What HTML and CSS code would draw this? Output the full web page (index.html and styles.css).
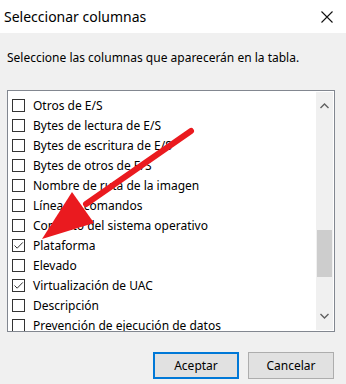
FILE: index.html
```html
<!DOCTYPE html>
<html lang="es">
<head>
    <meta charset="UTF-8">
    <meta name="viewport" content="width=device-width, initial-scale=1.0">
    <title>Seleccionar columnas</title>
    <link rel="stylesheet" href="styles.css">
</head>
<body>
    <div class="dialog">
        <!-- Barra de título -->
        <div class="titlebar">
            <span>Seleccionar columnas</span>
            <svg class="close" width="12" height="12" viewBox="0 0 12 12">
                <path d="M0.5 0.5 L11.5 11.5 M11.5 0.5 L0.5 11.5" stroke="#111" stroke-width="1.1" fill="none"/>
            </svg>
        </div>

        <p class="prompt">Seleccione las columnas que aparecerán en la tabla.</p>

        <!-- Lista de columnas -->
        <div class="listbox">
            <ul class="items">
                <li><span class="check"></span>Otros de E/S</li>
                <li><span class="check"></span>Bytes de lectura de E/S</li>
                <li><span class="check"></span>Bytes de escritura de E/S</li>
                <li><span class="check"></span>Bytes de otros de E/S</li>
                <li><span class="check"></span>Nombre de ruta de la imagen</li>
                <li><span class="check"></span>Línea de comandos</li>
                <li><span class="check"></span>Contexto del sistema operativo</li>
                <li><span class="check checked"><svg width="11" height="11" viewBox="0 0 11 11"><path d="M1.5 5.5 L4.2 8.2 L9.8 2.4" stroke="#333" stroke-width="1" fill="none"/></svg></span>Plataforma</li>
                <li><span class="check"></span>Elevado</li>
                <li><span class="check checked"><svg width="11" height="11" viewBox="0 0 11 11"><path d="M1.5 5.5 L4.2 8.2 L9.8 2.4" stroke="#333" stroke-width="1" fill="none"/></svg></span>Virtualización de UAC</li>
                <li><span class="check"></span>Descripción</li>
                <li><span class="check"></span>Prevención de ejecución de datos</li>
            </ul>
            <div class="scrollbar">
                <svg class="arrow-btn" width="9" height="6" viewBox="0 0 9 6"><path d="M0.5 5 L4.5 1 L8.5 5" stroke="#606060" stroke-width="1.4" fill="none"/></svg>
                <div class="track">
                    <div class="thumb"></div>
                </div>
                <svg class="arrow-btn" width="9" height="6" viewBox="0 0 9 6"><path d="M0.5 1 L4.5 5 L8.5 1" stroke="#606060" stroke-width="1.4" fill="none"/></svg>
            </div>
        </div>

        <div class="buttons">
            <button class="primary">Aceptar</button>
            <button>Cancelar</button>
        </div>
    </div>

    <!-- Flecha roja sobre la captura -->
    <svg class="overlay" width="346" height="384" viewBox="0 0 346 384">
        <path d="M191 131 L86 204" stroke="#ea1a1f" stroke-width="6" stroke-linecap="round" fill="none"/>
        <polygon points="42,239 72,192 94,223" fill="#ea1a1f"/>
    </svg>
</body>
</html>
```

FILE: styles.css
```css
body {
    margin: 0;
    padding: 0;
    background-color: #f0f0f0;
    font-family: "Noto Sans", "Open Sans", sans-serif;
    font-size: 12px;
    color: #000;
}
.dialog {
    width: 346px;
    height: 384px;
    display: flex;
    flex-direction: column;
}
.titlebar {
    height: 33px;
    background-color: #fff;
    display: flex;
    align-items: center;
    justify-content: space-between;
    padding: 0 13px 0 4px;
    font-size: 14px;
}
.close {
    margin-top: 1px;
}
.prompt {
    margin: 0;
    padding: 17px 7px 0;
    line-height: 16px;
}
.listbox {
    margin: 24px 11px 0 7px;
    height: 240px;
    border: 1px solid #828790;
    background-color: #fff;
    display: flex;
    overflow: hidden;
}
.items {
    list-style: none;
    margin: 0;
    padding: 4px 0 0 4px;
    flex: 1;
}
.items li {
    height: 20px;
    display: flex;
    align-items: center;
    white-space: nowrap;
}
.check {
    width: 13px;
    height: 13px;
    box-sizing: border-box;
    border: 1px solid #333;
    background-color: #fff;
    margin-right: 8px;
    display: flex;
    align-items: center;
    justify-content: center;
}
.scrollbar {
    width: 17px;
    margin: 1px 1px 1px 0;
    background-color: #f0f0f0;
    display: flex;
    flex-direction: column;
    align-items: center;
}
.arrow-btn {
    margin: 11px 0;
}
.track {
    flex: 1;
    width: 100%;
    position: relative;
}
.thumb {
    margin-top: 110px;
    height: 47px;
    margin-left: 1px;
    margin-right: 1px;
    background-color: #cdcdcd;
}
.buttons {
    display: flex;
    justify-content: flex-end;
    gap: 9px;
    margin: 20px 12px 0 0;
}
.buttons button {
    width: 86px;
    height: 27px;
    font-family: inherit;
    font-size: 12px;
    color: #000;
    background-color: #e1e1e1;
    border: 1px solid #adadad;
    padding: 0;
}
.buttons .primary {
    border: 2px solid #0078d7;
}
.overlay {
    position: absolute;
    top: 0;
    left: 0;
    pointer-events: none;
}
```
